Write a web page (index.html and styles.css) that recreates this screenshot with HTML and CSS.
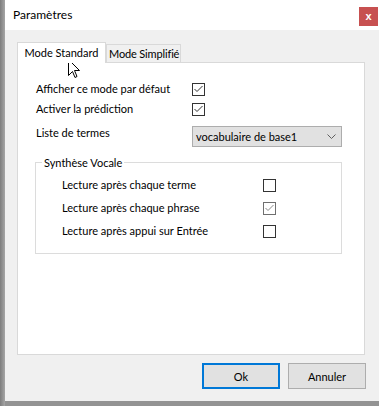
FILE: index.html
```html
<!DOCTYPE html>
<html lang="fr">
<head>
    <meta charset="UTF-8">
    <title>Paramètres</title>
    <link rel="stylesheet" href="styles.css">
</head>
<body>
    <div class="screen">
        <div class="edge"></div>
        <div class="window">
            <div class="titlebar">
                <span class="title">Paramètres</span>
                <span class="close">x</span>
            </div>
            <div class="content">
                <div class="tabs">
                    <div class="tab tab-active">Mode Standard</div>
                    <div class="tab tab-plain">Mode Simplifié</div>
                </div>
                <div class="panel">
                    <div class="row">
                        <span class="label">Afficher ce mode par défaut</span>
                        <span class="check"><svg width="11" height="11" viewBox="0 0 11 11"><polyline points="1.5,5 4,7.5 9.5,2" /></svg></span>
                    </div>
                    <div class="row">
                        <span class="label">Activer la prédiction</span>
                        <span class="check"><svg width="11" height="11" viewBox="0 0 11 11"><polyline points="1.5,5 4,7.5 9.5,2" /></svg></span>
                    </div>
                    <div class="row row-select">
                        <span class="label">Liste de termes</span>
                        <div class="select">
                            <span>vocabulaire de base1</span>
                            <svg width="9" height="5" viewBox="0 0 9 5"><polyline points="0.5,0.5 4.5,4.5 8.5,0.5" /></svg>
                        </div>
                    </div>
                    <fieldset class="group">
                        <legend>Synthèse Vocale</legend>
                        <div class="row">
                            <span class="label">Lecture après chaque terme</span>
                            <span class="check"></span>
                        </div>
                        <div class="row">
                            <span class="label">Lecture après chaque phrase</span>
                            <span class="check check-light"><svg width="11" height="11" viewBox="0 0 11 11"><polyline points="1.5,5 4,7.5 9.5,2" /></svg></span>
                        </div>
                        <div class="row">
                            <span class="label">Lecture après appui sur Entrée</span>
                            <span class="check"></span>
                        </div>
                    </fieldset>
                </div>
                <div class="buttons">
                    <button class="btn btn-default">Ok</button>
                    <button class="btn">Annuler</button>
                </div>
            </div>
        </div>
        <svg class="cursor" width="13" height="20" viewBox="0 0 13 20">
            <path d="M0.5,0.5 L0.5,16.5 L4.5,12.5 L7,18.5 L9,17.5 L6.5,11.5 L11.5,11.5 Z" />
        </svg>
    </div>
</body>
</html>
```

FILE: styles.css
```css
body {
    margin: 0;
    font-family: Lato, "Liberation Sans", sans-serif;
    font-size: 11px;
    color: #000;
}

.screen {
    position: relative;
    display: flex;
    align-items: flex-start;
    width: 379px;
    height: 406px;
    background: #939393;
}

.edge {
    width: 5px;
    height: 406px;
    background: linear-gradient(to right, #7d7d7d, #a6a6a6);
}

.window {
    flex: 1;
    height: 401px;
    display: flex;
    flex-direction: column;
}

/* Title bar */
.titlebar {
    height: 30px;
    background: #fff;
    display: flex;
    align-items: flex-start;
    justify-content: space-between;
}

.title {
    padding: 8px 0 0 8px;
    font-size: 12px;
    line-height: 14px;
}

.close {
    margin: 7px 1px 0 0;
    width: 19px;
    height: 19px;
    background: #c75050;
    color: #fff;
    font-family: "Liberation Sans", sans-serif;
    font-weight: bold;
    font-size: 11px;
    line-height: 18px;
    text-align: center;
}

.content {
    flex: 1;
    background: #f0f0f0;
    display: flex;
    flex-direction: column;
    padding: 12px 13px 12px 12px;
}

/* Tabs */
.tabs {
    display: flex;
    align-items: flex-end;
    height: 20px;
}

.tab {
    box-sizing: border-box;
    height: 18px;
    border: 1px solid #d9d9d9;
    border-bottom: none;
    background: #f0f0f0;
    line-height: 17px;
    text-align: center;
    white-space: nowrap;
}

.tab-active {
    position: relative;
    z-index: 1;
    width: 89px;
    height: 21px;
    margin-bottom: -1px;
    background: #fff;
    line-height: 19px;
}

.tab-plain {
    width: 75px;
    padding-left: 2px;
    text-align: left;
    letter-spacing: -0.15px;
    overflow: hidden;
}

.panel {
    flex: 1;
    margin-right: 1px;
    background: #fff;
    border: 1px solid #d9d9d9;
    padding: 16px 22px 0 18px;
}

/* Rows */
.row {
    display: flex;
    align-items: flex-start;
    height: 20px;
    line-height: 20px;
    white-space: nowrap;
}

.label {
    width: 156px;
}

.check {
    display: flex;
    box-sizing: border-box;
    width: 13px;
    height: 13px;
    margin-top: 4px;
    border: 1px solid #333;
    background: #fff;
}

.check polyline {
    fill: none;
    stroke: #333;
    stroke-width: 1;
}

.check-light {
    border-color: #6f6f6f;
}

.check-light polyline {
    stroke: #8a8a8a;
}

.row-select {
    height: 21px;
    margin-top: 7px;
}

.row-select .label {
    line-height: 13px;
}

.select {
    box-sizing: border-box;
    width: 150px;
    height: 21px;
    display: flex;
    align-items: center;
    justify-content: space-between;
    padding: 0 5px 0 3px;
    border: 1px solid #adadad;
    background: #e1e1e1;
    line-height: 19px;
}

.select polyline {
    fill: none;
    stroke: #5f5f5f;
    stroke-width: 1;
}

/* Group box */
.group {
    margin: 9px 0 0 -1px;
    padding: 4px 0 11px 6px;
    border: 1px solid #dcdcdc;
    min-width: 0;
}

.group legend {
    padding: 0 2px;
    line-height: 13px;
}

.group .row {
    height: 23px;
    line-height: 23px;
    padding-left: 20px;
}

.group .label {
    width: 201px;
}

.group .check {
    margin-top: 6px;
}

/* Buttons */
.buttons {
    display: flex;
    justify-content: flex-end;
    gap: 8px;
    margin-top: 8px;
}

.btn {
    box-sizing: border-box;
    width: 78px;
    height: 26px;
    padding: 0;
    border: 1px solid #adadad;
    background: #e1e1e1;
    font: inherit;
    color: #000;
}

.btn-default {
    border: 2px solid #0078d7;
}

.cursor {
    position: absolute;
    left: 68px;
    top: 59px;
}

.cursor path {
    fill: #fff;
    stroke: #000;
    stroke-width: 1;
    stroke-linejoin: miter;
}
```
